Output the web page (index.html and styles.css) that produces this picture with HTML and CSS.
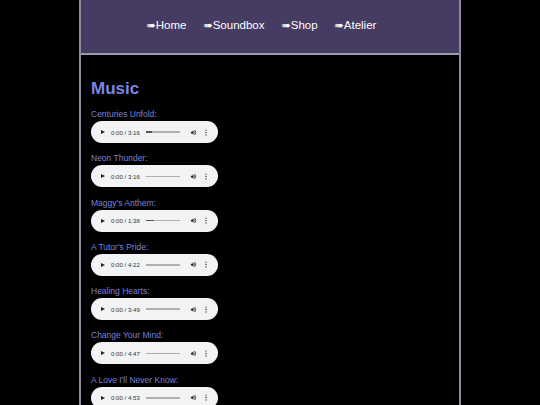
FILE: index.html
```html
<!DOCTYPE html>
<html lang="en">
<head>
  <meta charset="UTF-8">
  <meta name="viewport" content="width=device-width, initial-scale=1.0">
  <title>Music</title>
  <link rel="stylesheet" href="styles.css">
</head>
<body>
  <div class="page">
    <!-- navigation -->
    <header class="site-header">
      <nav class="nav">
        <a href="#"><span class="arrow">➠</span>Home</a>
        <a href="#"><span class="arrow">➠</span>Soundbox</a>
        <a href="#"><span class="arrow">➠</span>Shop</a>
        <a href="#"><span class="arrow">➠</span>Atelier</a>
      </nav>
    </header>

    <main class="content">
      <h1>Music</h1>

      <div class="track">
        <p class="track-title">Centuries Unfold:</p>
        <div class="player">
          <span class="play"></span>
          <span class="time">0:00 / 3:16</span>
          <span class="bar"><span class="buffered" style="width: 18%"></span></span>
          <svg class="vol" viewBox="0 0 24 24"><path d="M3 9v6h4l5 5V4L7 9H3zm13.5 3A4.5 4.5 0 0 0 14 8v8a4.5 4.5 0 0 0 2.5-4zM14 3.2v2.1a7 7 0 0 1 0 13.4v2.1a9 9 0 0 0 0-17.6z"/></svg>
          <svg class="more" viewBox="0 0 4 16"><circle cx="2" cy="2.5" r="1.5"/><circle cx="2" cy="8" r="1.5"/><circle cx="2" cy="13.5" r="1.5"/></svg>
        </div>
      </div>

      <div class="track">
        <p class="track-title">Neon Thunder:</p>
        <div class="player">
          <span class="play"></span>
          <span class="time">0:00 / 3:16</span>
          <span class="bar"></span>
          <svg class="vol" viewBox="0 0 24 24"><path d="M3 9v6h4l5 5V4L7 9H3zm13.5 3A4.5 4.5 0 0 0 14 8v8a4.5 4.5 0 0 0 2.5-4zM14 3.2v2.1a7 7 0 0 1 0 13.4v2.1a9 9 0 0 0 0-17.6z"/></svg>
          <svg class="more" viewBox="0 0 4 16"><circle cx="2" cy="2.5" r="1.5"/><circle cx="2" cy="8" r="1.5"/><circle cx="2" cy="13.5" r="1.5"/></svg>
        </div>
      </div>

      <div class="track">
        <p class="track-title">Maggy's Anthem:</p>
        <div class="player">
          <span class="play"></span>
          <span class="time">0:00 / 1:38</span>
          <span class="bar"><span class="buffered" style="width: 25%"></span></span>
          <svg class="vol" viewBox="0 0 24 24"><path d="M3 9v6h4l5 5V4L7 9H3zm13.5 3A4.5 4.5 0 0 0 14 8v8a4.5 4.5 0 0 0 2.5-4zM14 3.2v2.1a7 7 0 0 1 0 13.4v2.1a9 9 0 0 0 0-17.6z"/></svg>
          <svg class="more" viewBox="0 0 4 16"><circle cx="2" cy="2.5" r="1.5"/><circle cx="2" cy="8" r="1.5"/><circle cx="2" cy="13.5" r="1.5"/></svg>
        </div>
      </div>

      <div class="track">
        <p class="track-title">A Tutor's Pride:</p>
        <div class="player">
          <span class="play"></span>
          <span class="time">0:00 / 4:22</span>
          <span class="bar"></span>
          <svg class="vol" viewBox="0 0 24 24"><path d="M3 9v6h4l5 5V4L7 9H3zm13.5 3A4.5 4.5 0 0 0 14 8v8a4.5 4.5 0 0 0 2.5-4zM14 3.2v2.1a7 7 0 0 1 0 13.4v2.1a9 9 0 0 0 0-17.6z"/></svg>
          <svg class="more" viewBox="0 0 4 16"><circle cx="2" cy="2.5" r="1.5"/><circle cx="2" cy="8" r="1.5"/><circle cx="2" cy="13.5" r="1.5"/></svg>
        </div>
      </div>

      <div class="track">
        <p class="track-title">Healing Hearts:</p>
        <div class="player">
          <span class="play"></span>
          <span class="time">0:00 / 3:49</span>
          <span class="bar"></span>
          <svg class="vol" viewBox="0 0 24 24"><path d="M3 9v6h4l5 5V4L7 9H3zm13.5 3A4.5 4.5 0 0 0 14 8v8a4.5 4.5 0 0 0 2.5-4zM14 3.2v2.1a7 7 0 0 1 0 13.4v2.1a9 9 0 0 0 0-17.6z"/></svg>
          <svg class="more" viewBox="0 0 4 16"><circle cx="2" cy="2.5" r="1.5"/><circle cx="2" cy="8" r="1.5"/><circle cx="2" cy="13.5" r="1.5"/></svg>
        </div>
      </div>

      <div class="track">
        <p class="track-title">Change Your Mind:</p>
        <div class="player">
          <span class="play"></span>
          <span class="time">0:00 / 4:47</span>
          <span class="bar"></span>
          <svg class="vol" viewBox="0 0 24 24"><path d="M3 9v6h4l5 5V4L7 9H3zm13.5 3A4.5 4.5 0 0 0 14 8v8a4.5 4.5 0 0 0 2.5-4zM14 3.2v2.1a7 7 0 0 1 0 13.4v2.1a9 9 0 0 0 0-17.6z"/></svg>
          <svg class="more" viewBox="0 0 4 16"><circle cx="2" cy="2.5" r="1.5"/><circle cx="2" cy="8" r="1.5"/><circle cx="2" cy="13.5" r="1.5"/></svg>
        </div>
      </div>

      <div class="track">
        <p class="track-title">A Love I'll Never Know:</p>
        <div class="player">
          <span class="play"></span>
          <span class="time">0:00 / 4:53</span>
          <span class="bar"></span>
          <svg class="vol" viewBox="0 0 24 24"><path d="M3 9v6h4l5 5V4L7 9H3zm13.5 3A4.5 4.5 0 0 0 14 8v8a4.5 4.5 0 0 0 2.5-4zM14 3.2v2.1a7 7 0 0 1 0 13.4v2.1a9 9 0 0 0 0-17.6z"/></svg>
          <svg class="more" viewBox="0 0 4 16"><circle cx="2" cy="2.5" r="1.5"/><circle cx="2" cy="8" r="1.5"/><circle cx="2" cy="13.5" r="1.5"/></svg>
        </div>
      </div>
    </main>
  </div>
</body>
</html>
```

FILE: styles.css
```css
body {
  margin: 0;
  background: #000;
  font-family: "Liberation Sans", Arial, sans-serif;
}
.page {
  width: 378px;
  margin: 0 auto;
  min-height: 405px;
  border-left: 2px solid #8e8c9c;
  border-right: 2px solid #8e8c9c;
}
.site-header {
  background: #463b62;
  height: 53px;
  border-bottom: 2px solid #9d9bae;
  display: flex;
  align-items: center;
  justify-content: center;
}
.nav {
  display: flex;
  gap: 17px;
  margin-top: -3px;
  padding-right: 17px;
}
.nav a {
  color: #fff;
  font-size: 11.5px;
  text-decoration: none;
}
.nav .arrow {
  font-family: "DejaVu Sans", sans-serif;
  font-size: 11px;
}
.content {
  padding: 0 10px 20px;
}
.content h1 {
  font-size: 17px;
  color: #7d84e4;
  margin: 24px 0 10px;
}
.track {
  margin-bottom: 10.3px;
}
.track-title {
  margin: 0 0 2px;
  font-size: 8.5px;
  color: #7b80d8;
}
.player {
  width: 127px;
  height: 22px;
  border-radius: 11px;
  background: #f1f3f4;
  display: flex;
  align-items: center;
}
.play {
  width: 0;
  height: 0;
  margin-left: 10px;
  border-top: 2.5px solid transparent;
  border-bottom: 2.5px solid transparent;
  border-left: 4px solid #222;
}
.time {
  margin-left: 6px;
  font-size: 6.1px;
  color: #333;
  white-space: nowrap;
}
.bar {
  width: 34px;
  height: 1.5px;
  margin-left: 6px;
  background: #b0b0b0;
  display: flex;
}
.buffered {
  background: #555;
}
.vol {
  width: 7px;
  height: 7px;
  margin-left: 10px;
  fill: #222;
}
.more {
  width: 2px;
  height: 7px;
  margin-left: 8px;
  fill: #222;
}
```
